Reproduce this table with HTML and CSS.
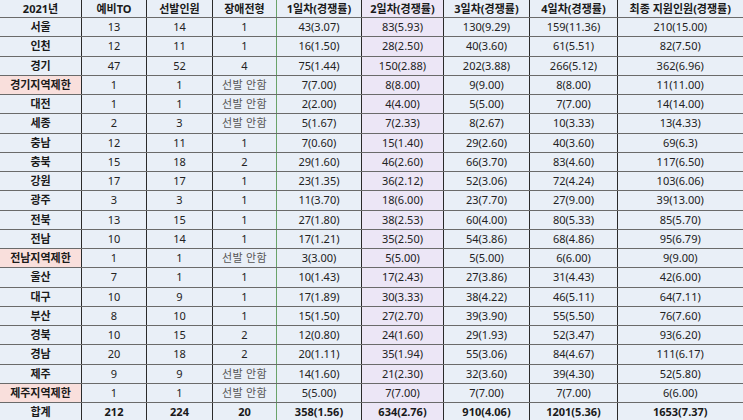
FILE: index.html
```html
<!DOCTYPE html>
<html lang="ko">
<head>
<meta charset="utf-8">
<title>2021년 예비TO 경쟁률</title>
<link rel="stylesheet" href="styles.css">
</head>
<body>
<table class="grid">
<colgroup>
<col class="c1"><col class="c2"><col class="c3"><col class="c4"><col class="c5"><col class="c6"><col class="c7"><col class="c8"><col class="c9">
</colgroup>
<thead>
<tr class="head">
<th>2021년</th><th>예비TO</th><th>선발인원</th><th>장애전형</th><th class="day1">1일차(경쟁률)</th><th class="day2">2일차(경쟁률)</th><th>3일차(경쟁률)</th><th>4일차(경쟁률)</th><th>최종 지원인원(경쟁률)</th>
</tr>
</thead>
<tbody>
<tr><th>서울</th><td>13</td><td>14</td><td>1</td><td class="day1">43(3.07)</td><td class="day2">83(5.93)</td><td>130(9.29)</td><td>159(11.36)</td><td>210(15.00)</td></tr>
<tr><th>인천</th><td>12</td><td>11</td><td>1</td><td class="day1">16(1.50)</td><td class="day2">28(2.50)</td><td>40(3.60)</td><td>61(5.51)</td><td>82(7.50)</td></tr>
<tr><th>경기</th><td>47</td><td>52</td><td>4</td><td class="day1">75(1.44)</td><td class="day2">150(2.88)</td><td>202(3.88)</td><td>266(5.12)</td><td>362(6.96)</td></tr>
<tr><th class="limit">경기지역제한</th><td>1</td><td>1</td><td class="none">선발 안함</td><td class="day1">7(7.00)</td><td class="day2">8(8.00)</td><td>9(9.00)</td><td>8(8.00)</td><td>11(11.00)</td></tr>
<tr><th>대전</th><td>1</td><td>1</td><td class="none">선발 안함</td><td class="day1">2(2.00)</td><td class="day2">4(4.00)</td><td>5(5.00)</td><td>7(7.00)</td><td>14(14.00)</td></tr>
<tr><th>세종</th><td>2</td><td>3</td><td class="none">선발 안함</td><td class="day1">5(1.67)</td><td class="day2">7(2.33)</td><td>8(2.67)</td><td>10(3.33)</td><td>13(4.33)</td></tr>
<tr><th>충남</th><td>12</td><td>11</td><td>1</td><td class="day1">7(0.60)</td><td class="day2">15(1.40)</td><td>29(2.60)</td><td>40(3.60)</td><td>69(6.3)</td></tr>
<tr><th>충북</th><td>15</td><td>18</td><td>2</td><td class="day1">29(1.60)</td><td class="day2">46(2.60)</td><td>66(3.70)</td><td>83(4.60)</td><td>117(6.50)</td></tr>
<tr><th>강원</th><td>17</td><td>17</td><td>1</td><td class="day1">23(1.35)</td><td class="day2">36(2.12)</td><td>52(3.06)</td><td>72(4.24)</td><td>103(6.06)</td></tr>
<tr><th>광주</th><td>3</td><td>3</td><td>1</td><td class="day1">11(3.70)</td><td class="day2">18(6.00)</td><td>23(7.70)</td><td>27(9.00)</td><td>39(13.00)</td></tr>
<tr><th>전북</th><td>13</td><td>15</td><td>1</td><td class="day1">27(1.80)</td><td class="day2">38(2.53)</td><td>60(4.00)</td><td>80(5.33)</td><td>85(5.70)</td></tr>
<tr><th>전남</th><td>10</td><td>14</td><td>1</td><td class="day1">17(1.21)</td><td class="day2">35(2.50)</td><td>54(3.86)</td><td>68(4.86)</td><td>95(6.79)</td></tr>
<tr><th class="limit">전남지역제한</th><td>1</td><td>1</td><td class="none">선발 안함</td><td class="day1">3(3.00)</td><td class="day2">5(5.00)</td><td>5(5.00)</td><td>6(6.00)</td><td>9(9.00)</td></tr>
<tr><th>울산</th><td>7</td><td>1</td><td>1</td><td class="day1">10(1.43)</td><td class="day2">17(2.43)</td><td>27(3.86)</td><td>31(4.43)</td><td>42(6.00)</td></tr>
<tr><th>대구</th><td>10</td><td>9</td><td>1</td><td class="day1">17(1.89)</td><td class="day2">30(3.33)</td><td>38(4.22)</td><td>46(5.11)</td><td>64(7.11)</td></tr>
<tr><th>부산</th><td>8</td><td>10</td><td>1</td><td class="day1">15(1.50)</td><td class="day2">27(2.70)</td><td>39(3.90)</td><td>55(5.50)</td><td>76(7.60)</td></tr>
<tr><th>경북</th><td>10</td><td>15</td><td>2</td><td class="day1">12(0.80)</td><td class="day2">24(1.60)</td><td>29(1.93)</td><td>52(3.47)</td><td>93(6.20)</td></tr>
<tr><th>경남</th><td>20</td><td>18</td><td>2</td><td class="day1">20(1.11)</td><td class="day2">35(1.94)</td><td>55(3.06)</td><td>84(4.67)</td><td>111(6.17)</td></tr>
<tr><th>제주</th><td>9</td><td>9</td><td class="none">선발 안함</td><td class="day1">14(1.60)</td><td class="day2">21(2.30)</td><td>32(3.60)</td><td>39(4.30)</td><td>52(5.80)</td></tr>
<tr><th class="limit">제주지역제한</th><td>1</td><td>1</td><td class="none">선발 안함</td><td class="day1">5(5.00)</td><td class="day2">7(7.00)</td><td>7(7.00)</td><td>7(7.00)</td><td>6(6.00)</td></tr>
<tr class="total"><th>합계</th><td>212</td><td>224</td><td>20</td><td class="day1">358(1.56)</td><td class="day2">634(2.76)</td><td>910(4.06)</td><td>1201(5.36)</td><td>1653(7.37)</td></tr>
</tbody>
</table>
</body>
</html>
```
FILE: styles.css
```css
html, body {
  margin: 0;
  padding: 0;
  background: #e9eff7;
}
body {
  width: 743px;
  height: 420px;
  overflow: hidden;
  font-family: "Noto Sans", "Noto Sans CJK KR", sans-serif;
  font-size: 11px;
  color: #222;
}
.grid {
  table-layout: fixed;
  border-collapse: collapse;
  width: 743px;
  margin: -1px 0 0 -1px;
}
.c1 { width: 82px; }
.c2 { width: 65px; }
.c3 { width: 66px; }
.c4 { width: 64px; }
.c5 { width: 85px; }
.c6 { width: 82px; }
.c7 { width: 86px; }
.c8 { width: 88px; }
.c9 { width: 125px; }
.grid th, .grid td {
  padding: 0;
  text-align: center;
  vertical-align: middle;
  white-space: nowrap;
  background: #e9eff7;
  border-left: 1px solid #2a2a2a;
  border-top: 1px solid #6a6a6a;
  border-bottom: 1px solid #6a6a6a;
  line-height: 14px;
}
.grid th {
  font-weight: bold;
  color: #1a1a1a;
}
.grid td {
  font-weight: normal;
}
.head {
  height: 18px;
}
tbody tr {
  height: 19.25px;
}
.grid .day1 {
  border-left: 1px solid #6aa36a;
}
.grid .day2 {
  background: #ece6f6;
}
.grid .limit {
  background: #f9dfdc;
}
.grid .none {
  color: #555;
  letter-spacing: 0.3px;
}
.total td {
  font-weight: bold;
  color: #1a1a1a;
}
.total {
  height: 19px;
}
```
